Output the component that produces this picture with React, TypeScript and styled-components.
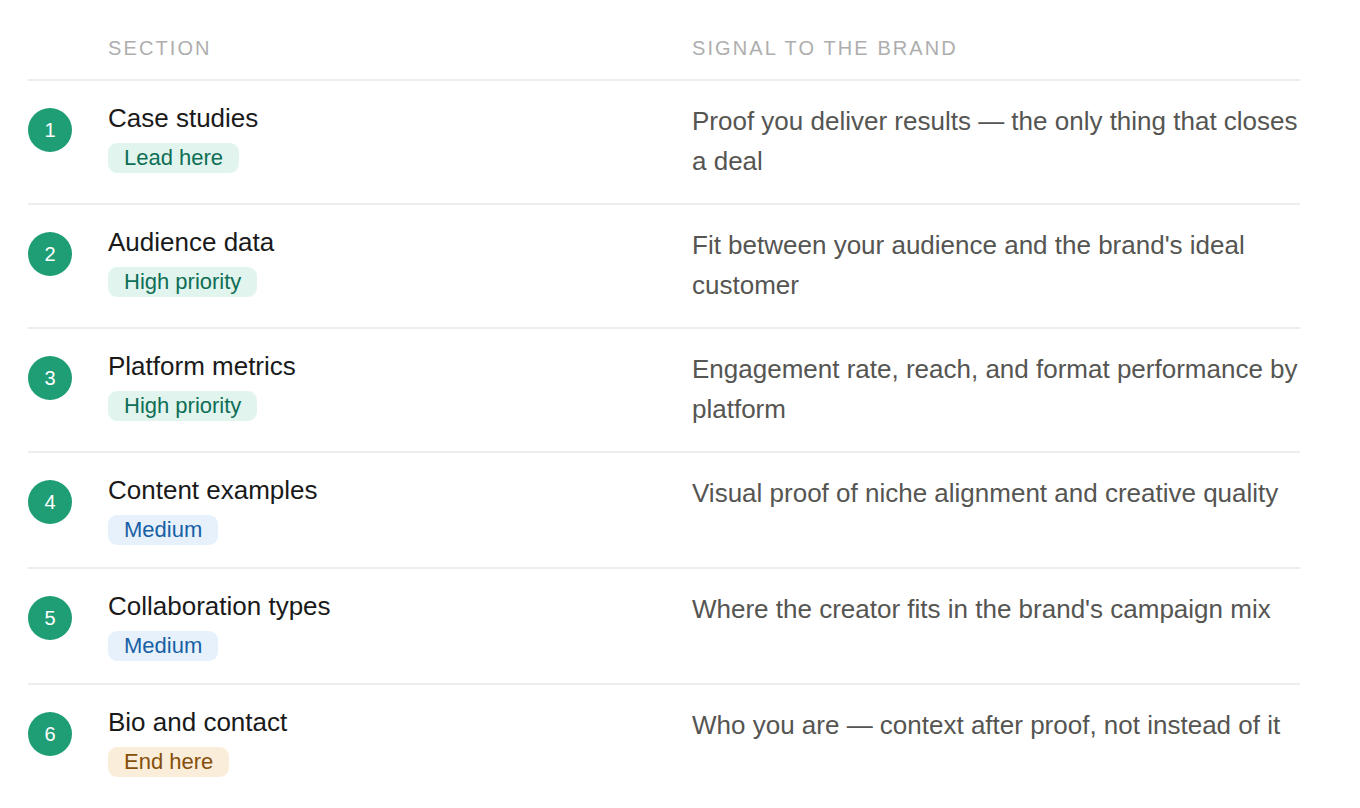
import React from "react";
import styled, { createGlobalStyle } from "styled-components";

const Global = createGlobalStyle`
  html, body { margin: 0; padding: 0; background: #ffffff; }
  body { font-family: "Liberation Sans", Arial, sans-serif; }
`;

const Page = styled.div`
  padding: 36px 60px 0 28px;
  width: 1272px;
`;

const GridRow = styled.div`
  display: grid;
  grid-template-columns: 44px 548px 608px;
  column-gap: 36px;
`;

const HeaderRow = styled(GridRow)`
  padding-bottom: 19px;
  border-bottom: 2px solid #ededed;
`;

const HeadCell = styled.div`
  font-size: 20px;
  line-height: 24px;
  letter-spacing: 2.1px;
  text-transform: uppercase;
  color: #aeaeae;
`;

const Row = styled(GridRow)`
  padding: 22px 0;
  border-bottom: 2px solid #ededed;
  &:last-child { border-bottom: none; }
`;

const Num = styled.div`
  width: 44px;
  height: 44px;
  margin-top: 5px;
  border-radius: 50%;
  background: #1f9e75;
  color: #ffffff;
  font-size: 20px;
  display: flex;
  align-items: center;
  justify-content: center;
`;

const NameCell = styled.div`
  display: flex;
  flex-direction: column;
  align-items: flex-start;
`;

const Name = styled.div`
  font-size: 26px;
  line-height: 30px;
  color: #1a1a1a;
`;

type Tone = "green" | "blue" | "amber";
const tones: Record<Tone, { bg: string; fg: string }> = {
  green: { bg: "#e1f5ee", fg: "#0f6e56" },
  blue: { bg: "#e6f1fb", fg: "#185fa5" },
  amber: { bg: "#faeeda", fg: "#854f0b" },
};

const Badge = styled.span<{ $tone: Tone }>`
  margin-top: 10px;
  display: inline-block;
  padding: 3px 16px;
  font-size: 22px;
  line-height: 24px;
  border-radius: 9px;
  background: ${(p) => tones[p.$tone].bg};
  color: ${(p) => tones[p.$tone].fg};
`;

const Signal = styled.div`
  font-size: 26px;
  line-height: 40px;
  margin-top: -2px;
  color: #555552;
`;

const rows: { name: string; badge: string; tone: Tone; signal: string }[] = [
  { name: "Case studies", badge: "Lead here", tone: "green", signal: "Proof you deliver results — the only thing that closes a deal" },
  { name: "Audience data", badge: "High priority", tone: "green", signal: "Fit between your audience and the brand's ideal customer" },
  { name: "Platform metrics", badge: "High priority", tone: "green", signal: "Engagement rate, reach, and format performance by platform" },
  { name: "Content examples", badge: "Medium", tone: "blue", signal: "Visual proof of niche alignment and creative quality" },
  { name: "Collaboration types", badge: "Medium", tone: "blue", signal: "Where the creator fits in the brand's campaign mix" },
  { name: "Bio and contact", badge: "End here", tone: "amber", signal: "Who you are — context after proof, not instead of it" },
];

export default function App() {
  return (
    <>
      <Global />
      <Page>
        <HeaderRow>
          <div />
          <HeadCell>Section</HeadCell>
          <HeadCell>Signal to the brand</HeadCell>
        </HeaderRow>
        {rows.map((r, i) => (
          <Row key={r.name}>
            <Num>{i + 1}</Num>
            <NameCell>
              <Name>{r.name}</Name>
              <Badge $tone={r.tone}>{r.badge}</Badge>
            </NameCell>
            <Signal>{r.signal}</Signal>
          </Row>
        ))}
      </Page>
    </>
  );
}
